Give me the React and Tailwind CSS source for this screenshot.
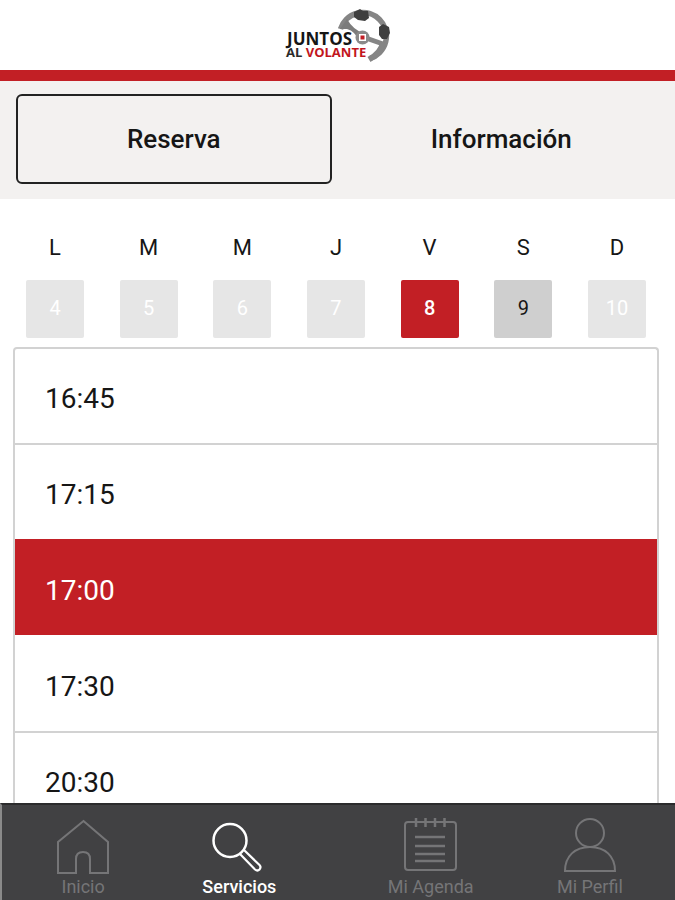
import React, { useState } from "react";

const tabs = [
  { id: "reserva", label: "Reserva" },
  { id: "informacion", label: "Información" },
];

const days = [
  { letter: "L", number: 4, available: false },
  { letter: "M", number: 5, available: false },
  { letter: "M", number: 6, available: false },
  { letter: "J", number: 7, available: false },
  { letter: "V", number: 8, available: true },
  { letter: "S", number: 9, available: true },
  { letter: "D", number: 10, available: false },
];

const hours = ["16:45", "17:15", "17:00", "17:30", "20:30"];

function Logo() {
  return (
    <svg width="105" height="54" viewBox="0 0 105 54" role="img" aria-label="Juntos al volante">
      <g fill="none" stroke="#858585">
        <path d="M55.500 20A23.500 23.500 0 1 1 85 49.500" strokeWidth="5.500" />
        <path d="M78 28L98 35" strokeWidth="5" />
        <path d="M84 50.500C92 46 97 41 98 33" strokeWidth="6" />
      </g>
      <path d="M55 20L62 10Q68 21 80 25L75 33Q70 22 62 20Z" fill="#7c7c7c" />
      <circle cx="77.500" cy="28.500" r="7" fill="#8a8a8a" />
      <path d="M69 3L73 1L75 0L78 2L83 2L84 9L80 12L73 11L69 8Z" fill="#3f3f3f" />
      <path d="M94 18L98 15L104 18L105 24L102 30L97 30L94 26Z" fill="#3f3f3f" />
      <rect x="74" y="25" width="7" height="7" fill="#ffffff" />
      <rect x="75.500" y="26.500" width="4" height="4" fill="#c21f25" />
      <g fontFamily="'Open Sans', sans-serif" fontWeight="700" stroke="#ffffff" strokeWidth="2" paintOrder="stroke">
        <text x="1" y="48" fontSize="13" fill="#2b2b2b">
          AL <tspan fill="#c2161d">VOLANTE</tspan>
        </text>
        <text x="2" y="36" fontSize="17" fill="#161616">
          JUNTOS
        </text>
      </g>
    </svg>
  );
}

function HomeIcon() {
  return (
    <svg width="54" height="56" viewBox="0 0 54 56" fill="none" stroke="currentColor" strokeWidth="2" aria-hidden="true">
      <path d="M27.500 3L52 24V55H34V41Q34 34 27 34Q20 34 20 41V55H2V24Z" />
    </svg>
  );
}

function SearchIcon() {
  return (
    <svg width="54" height="56" viewBox="0 0 54 56" fill="none" stroke="currentColor" strokeWidth="2.500" aria-hidden="true">
      <circle cx="18" cy="22.500" r="16.500" />
      <path d="M28 36L43 51.500Q45.500 53.500 47.500 51.500Q49.500 49 47.500 47L32 32" strokeWidth="2.200" />
    </svg>
  );
}

function AgendaIcon() {
  return (
    <svg width="54" height="56" viewBox="0 0 54 56" fill="none" stroke="currentColor" strokeWidth="2" aria-hidden="true">
      <rect x="1" y="4" width="51" height="48" rx="3" />
      <path d="M12 0V9M21.500 0V9M31 0V9M40.500 0V9" strokeWidth="2.500" />
      <path d="M11 19H41M11 28H41M11 36H41M11 43H41" strokeWidth="2.500" />
    </svg>
  );
}

function ProfileIcon() {
  return (
    <svg width="54" height="56" viewBox="0 0 54 56" fill="none" stroke="currentColor" strokeWidth="2" aria-hidden="true">
      <circle cx="27" cy="15" r="14" />
      <path d="M2 53C2 38 12 29 27 29C42 29 52 38 52 53Z" />
    </svg>
  );
}

const navItems = [
  { id: "inicio", label: "Inicio", icon: HomeIcon },
  { id: "servicios", label: "Servicios", icon: SearchIcon },
  { id: "agenda", label: "Mi Agenda", icon: AgendaIcon },
  { id: "perfil", label: "Mi Perfil", icon: ProfileIcon },
];

function dayStyle(day, selected) {
  if (selected) return "bg-[#c21f25] text-white font-medium";
  if (day.available) return "bg-[#cfcfcf] text-[#161616]";
  return "bg-[#e6e6e6] text-white";
}

function hourBorder(index, selectedIndex) {
  if (index === selectedIndex) return "border-[#c21f25]";
  // no divider right under the selected row
  if (index === selectedIndex + 1) return "border-white";
  return "border-[#d2d2d2]";
}

export default function App() {
  const [tab, setTab] = useState("reserva");
  const [day, setDay] = useState(8);
  const [hour, setHour] = useState("17:00");

  return (
    <div className="flex h-screen flex-col bg-white font-[Roboto,sans-serif] text-[#161616]">
      <header className="flex justify-center border-b-11 border-[#c21f25] pt-[9px] pb-[7px]">
        <Logo />
      </header>

      <div className="grid grid-cols-2 gap-3 bg-[#f3f1f0] px-4 pt-[13px] pb-[15px]">
        {tabs.map((item) => (
          <button
            key={item.id}
            type="button"
            onClick={() => setTab(item.id)}
            className={`h-[90px] rounded-md border-2 text-[26px] font-medium ${tab === item.id ? "border-[#222222]" : "border-transparent"}`}
          >
            {item.label}
          </button>
        ))}
      </div>

      <main className="flex min-h-0 flex-1 flex-col pr-4 pl-[13px]">
        <div className="flex justify-between px-[13px] pt-[33px] pb-[9px]">
          {days.map((item) => (
            <div key={item.number} className="flex w-[58px] flex-col items-center gap-4">
              <span className="text-[22px] leading-8">{item.letter}</span>
              <button
                type="button"
                disabled={!item.available}
                onClick={() => setDay(item.number)}
                className={`h-[58px] w-full rounded-xs pb-0.5 text-xl ${dayStyle(item, day === item.number)}`}
              >
                {item.number}
              </button>
            </div>
          ))}
        </div>

        <ul className="min-h-0 flex-1 overflow-y-auto rounded-t-sm border-x-2 border-t-2 border-[#d2d2d2] [scrollbar-width:none]">
          {hours.map((item, index) => (
            <li key={item} className={`border-t-2 first:border-t-0 ${hourBorder(index, hours.indexOf(hour))}`}>
              <button
                type="button"
                onClick={() => setHour(item)}
                className={`block h-[94px] w-full px-[30px] pt-1.5 text-left text-[28px] ${hour === item ? "bg-[#c21f25] text-white" : ""}`}
              >
                {item}
              </button>
            </li>
          ))}
        </ul>
      </main>

      <nav className="grid grid-cols-[162fr_150fr_232fr_86fr] border-t-2 border-l-2 border-t-[#2b2b2c] border-l-[#8a8a8a] bg-[#414143] pt-[13px] pr-[42px]">
        {navItems.map(({ id, label, icon: Icon }) => (
          <a
            key={id}
            href={`#${id}`}
            className={`flex flex-col items-center whitespace-nowrap ${id === "servicios" ? "font-medium text-white" : "text-[#757577]"}`}
          >
            <Icon />
            <span className="text-lg leading-[26px]">{label}</span>
          </a>
        ))}
      </nav>
    </div>
  );
}
